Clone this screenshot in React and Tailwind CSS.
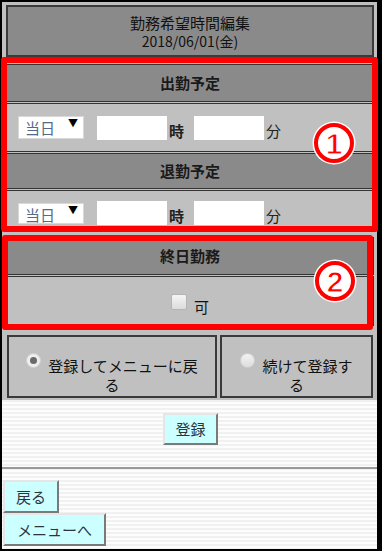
import React from "react";

const font = { fontFamily: '"Noto Sans CJK JP", "Noto Sans", sans-serif' };

function Circled({ n, className }) {
  return (
    <svg className={className} width="46" height="44" viewBox="0 0 46 44">
      <circle cx="23" cy="22" r="21.5" fill="#ffffff" />
      <circle cx="23" cy="22" r="18" fill="#ffffff" stroke="#ff0000" strokeWidth="4" />
      <text
        x="23"
        y="32.5"
        textAnchor="middle"
        fontFamily="Liberation Sans, Arial, sans-serif"
        fontWeight="bold"
        fontSize="30"
        fill="#ff0000"
        stroke="#ffffff"
        strokeWidth="1"
      >
        {n}
      </text>
    </svg>
  );
}

function SelectBox({ h }) {
  return (
    <div className={`flex w-[66px] ${h} items-start border border-[#d8d8d8] bg-white pl-[6px]`}>
      <span className="text-[15px] leading-[21px] text-[#55698a]">当日</span>
      <span className="ml-[13px] mt-[1px] text-[10px] leading-[10px] text-black">▼</span>
    </div>
  );
}

function TimeRow({ rowClass, selH }) {
  return (
    <div className={`flex items-center border border-[#333] bg-[#c0c0c0] pl-[11px] ${rowClass}`}>
      <SelectBox h={selH} />
      <div className="ml-[13px] h-[24px] w-[70px] bg-white" />
      <span className="ml-[2px] pt-[6px] text-[15px] font-bold leading-[20px] text-[#222]">時</span>
      <div className="ml-[10px] h-[24px] w-[70px] bg-white" />
      <span className="ml-[2px] pt-[6px] text-[15px] leading-[20px] text-[#222]">分</span>
    </div>
  );
}

function SectionHead({ children, cls }) {
  return (
    <div className={`flex items-center justify-center border border-[#333] bg-[#8a8a8a] ${cls}`}>
      <span className="text-[15px] font-bold leading-[20px] text-[#1a1a1a]">{children}</span>
    </div>
  );
}

function CyanButton({ children, cls }) {
  return (
    <div
      className={`flex items-center justify-center border-[2px] border-t-[#e6e6e6] border-l-[#e6e6e6] border-r-[#7a7a7a] border-b-[#7a7a7a] bg-[#ccffff] text-[15px] leading-[20px] text-[#2c3440] ${cls}`}
    >
      {children}
    </div>
  );
}

export default function App() {
  return (
    <div className="relative h-[551px] w-[382px] overflow-hidden bg-black pb-[2px] pl-[2px] pr-[5px] pt-[2px]" style={font}>
      <div className="flex h-full flex-col">
        {/* upper gray area */}
        <div className="flex h-[398px] flex-col bg-[#c0c0c0] pl-[4px] pr-[3px]">
          <div className="mt-[3px] flex h-[52px] flex-col items-center justify-center border-2 border-[#3a3a3a] bg-[#8a8a8a]">
            <span className="text-[15px] leading-[20px] text-[#111]">勤務希望時間編集</span>
            <span className="text-[14px] leading-[17px] text-[#111]">2018/06/01(金)</span>
          </div>

          <SectionHead cls="mt-[7px] h-[38px]">出勤予定</SectionHead>
          <div className="mt-[1px]">
            <TimeRow rowClass="h-[49px]" selH="h-[23px]" />
          </div>
          <SectionHead cls="mt-[1px] h-[36px]">退勤予定</SectionHead>
          <div className="mt-[1px]">
            <TimeRow rowClass="h-[42px] pt-[4px]" selH="h-[21px]" />
          </div>

          <SectionHead cls="mt-[5px] h-[38px]">終日勤務</SectionHead>
          <div className="mt-[1px] flex h-[50px] items-center justify-center border border-[#333] bg-[#c0c0c0] pt-[2px]">
            <div className="h-[16px] w-[16px] rounded-[2px] border border-[#b4b4b4] bg-gradient-to-b from-[#f4f4f4] to-[#dcdcdc]" />
            <span className="ml-[7px] pt-[9px] text-[15px] leading-[20px] text-[#111]">可</span>
          </div>

          <div className="mt-[9px] flex h-[63px] gap-[3px] pl-[1px]">
            <div className="w-[210px] border-2 border-[#3a3a3a] bg-[#c0c0c0] pt-[16px] text-center text-[15px] leading-[19px] text-[#111]">
              <span className="mr-[7px] inline-block h-[15px] w-[15px] rounded-full border border-[#d0d0d0] bg-[#eeeeee] p-[3px] align-[4px]">
                <span className="block h-full w-full rounded-full bg-[#6a6a6a]" />
              </span>
              登録してメニューに戻
              <br />る
            </div>
            <div className="w-[153px] border-2 border-[#3a3a3a] bg-[#c0c0c0] pt-[16px] text-center text-[15px] leading-[19px] text-[#111]">
              <span className="mr-[7px] inline-block h-[15px] w-[15px] rounded-full border border-[#d0d0d0] bg-gradient-to-b from-[#f2f2f2] to-[#dedede] align-[4px]" />
              続けて登録す
              <br />る
            </div>
          </div>
        </div>

        {/* lower white striped area */}
        <div className="flex flex-1 flex-col bg-[repeating-linear-gradient(180deg,#f1f1f1_0px,#f1f1f1_2px,#fdfdfd_2px,#fdfdfd_4px)]">
          <div className="mt-[13px] flex justify-center pl-[2px]">
            <CyanButton cls="h-[32px] w-[55px]">登録</CyanButton>
          </div>
          <div className="mt-[22px] h-[2px] bg-[#9a9a9a]" />
          <div className="ml-[1px] mt-[11px] flex flex-col items-start">
            <CyanButton cls="h-[33px] w-[56px]">戻る</CyanButton>
            <CyanButton cls="h-[33px] w-[103px]">メニューへ</CyanButton>
          </div>
        </div>
      </div>

      {/* annotations */}
      <div className="absolute left-[1px] top-[57px] h-[175px] w-[377px] rounded-[3px] border-[6px] border-[#ff0000]" />
      <div className="absolute left-[2px] top-[235px] h-[95px] w-[371px] rounded-[3px] border-[6px] border-[#ff0000]" />
      <Circled n="1" className="absolute left-[311px] top-[121px]" />
      <Circled n="2" className="absolute left-[312px] top-[259px]" />
    </div>
  );
}
